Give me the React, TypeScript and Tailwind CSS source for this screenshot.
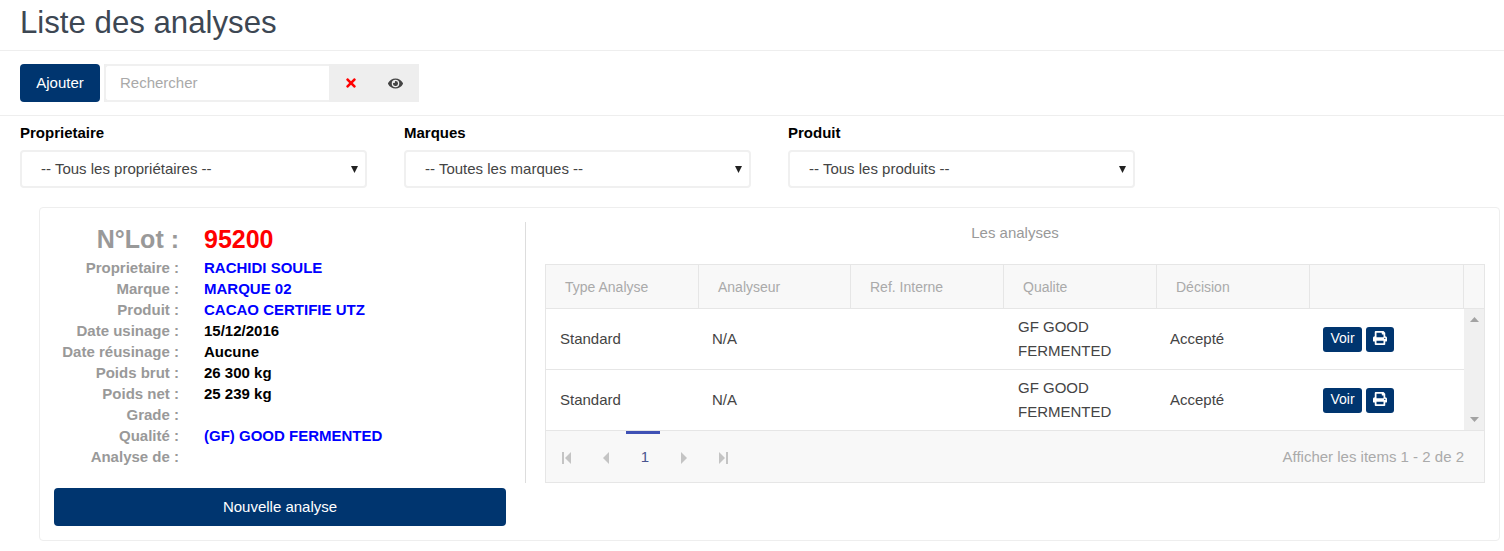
import { FaEye, FaPrint, FaTimes } from "react-icons/fa";

const filters = [
  { label: "Proprietaire", value: "-- Tous les propriétaires --" },
  { label: "Marques", value: "-- Toutes les marques --" },
  { label: "Produit", value: "-- Tous les produits --" },
];

const lotRows: { label: string; value?: string; color?: string }[] = [
  { label: "Proprietaire :", value: "RACHIDI SOULE", color: "text-[#0000ff]" },
  { label: "Marque :", value: "MARQUE 02", color: "text-[#0000ff]" },
  { label: "Produit :", value: "CACAO CERTIFIE UTZ", color: "text-[#0000ff]" },
  { label: "Date usinage :", value: "15/12/2016", color: "text-black" },
  { label: "Date réusinage :", value: "Aucune", color: "text-black" },
  { label: "Poids brut :", value: "26 300 kg", color: "text-black" },
  { label: "Poids net :", value: "25 239 kg", color: "text-black" },
  { label: "Grade :" },
  { label: "Qualité :", value: "(GF) GOOD FERMENTED", color: "text-[#0000ff]" },
  { label: "Analyse de :" },
];

const columns = "grid grid-cols-[153px_152px_153px_153px_153px_154px]";

function FilterSelect({ label, value }: { label: string; value: string }) {
  return (
    <div className="w-[347px]">
      <p className="h-[18px] text-[15px] leading-[18px] font-bold text-black">{label}</p>
      <div className="mt-[8px] flex h-[38px] items-center justify-between rounded border-2 border-[#f0f0f0] pr-[7px] pl-[19px] text-[15px] text-[#444444]">
        <span>{value}</span>
        <svg className="h-[7px] w-[7px] text-[#222222]" viewBox="0 0 8 8" aria-hidden>
          <path d="M0 0h8L4 8z" fill="currentColor" />
        </svg>
      </div>
    </div>
  );
}

function AnalysisRow() {
  return (
    <div className={`${columns} h-[61px] items-center border-b border-[#e6e6e6] text-[15px] leading-[24px] text-[#444444]`}>
      <span className="pl-[14px]">Standard</span>
      <span className="pl-[13px]">N/A</span>
      <span />
      <span className="pl-[14px]">
        GF GOOD
        <br />
        FERMENTED
      </span>
      <span className="pl-[13px]">Accepté</span>
      <div className="flex gap-1 pl-[13px]">
        <button type="button" className="h-[25px] w-[39px] rounded-[3px] bg-[#00356f] pb-[2px] text-[14px] leading-none text-white">
          Voir
        </button>
        <button type="button" className="flex h-[25px] w-[28px] items-center justify-center rounded-[3px] bg-[#00356f] pb-[2px] text-white">
          <FaPrint className="h-[14px] w-[14px]" />
        </button>
      </div>
    </div>
  );
}

function PagerIcon({ d, bar }: { d: string; bar?: number }) {
  return (
    <svg className="h-[14px] w-[11px] text-[#c4c4c4]" viewBox="0 0 11 14" aria-hidden>
      <path d={d} fill="currentColor" />
      {bar !== undefined && <rect x={bar} y="1" width="2" height="12" fill="currentColor" />}
    </svg>
  );
}

export default function App() {
  return (
    <div className="h-[551px] overflow-hidden bg-white font-['Liberation_Sans',Arial,sans-serif]">
      <header className="h-[51px] border-b border-[#eeeeee] pl-[20px]">
        <h1 className="pt-[4px] text-[31.2px] leading-[38px] text-[#3d4753]">Liste des analyses</h1>
      </header>

      <div className="flex h-[65px] items-start gap-[4px] border-b border-[#eeeeee] pt-[13px] pl-[20px]">
        <button type="button" className="h-[38px] w-[80px] rounded bg-[#00356f] text-[15px] text-white">
          Ajouter
        </button>
        <div className="flex h-[38px] bg-[#eeeeee]">
          <div className="flex w-[225px] items-center rounded-l border-2 border-r-0 border-[#f0f0f0] bg-white pl-[14px] text-[15px] text-[#a9a9a9]">
            Rechercher
          </div>
          <div className="flex w-[45px] items-center justify-center pr-[2px] text-[#ff0000]">
            <FaTimes className="h-[14px] w-[14px]" />
          </div>
          <div className="flex w-[45px] items-center justify-center pr-[3px] text-[#444444]">
            <FaEye className="h-[15px] w-[15px]" />
          </div>
        </div>
      </div>

      <div className="flex gap-[37px] pt-[8px] pl-[20px]">
        {filters.map((filter) => (
          <FilterSelect key={filter.label} label={filter.label} value={filter.value} />
        ))}
      </div>

      <section className="mt-[19px] ml-[39px] flex h-[334px] w-[1461px] rounded border border-[#eeeeee] pt-[14px] pl-[14px]">
        <div className="w-[452px]">
          <div className="flex h-[35px] items-center">
            <span className="w-[125px] text-right text-[25px] font-bold text-[#999999]">N°Lot :</span>
            <span className="ml-[25px] text-[25px] font-bold text-[#ff0000]">95200</span>
          </div>
          <dl className="mt-[1px]">
            {lotRows.map((row) => (
              <div key={row.label} className="flex h-[21px] items-center text-[15px] font-bold">
                <dt className="w-[125px] text-right whitespace-nowrap text-[#999999]">{row.label}</dt>
                <dd className={`ml-[25px] ${row.color ?? ""}`}>{row.value}</dd>
              </div>
            ))}
          </dl>
          <button type="button" className="mt-[20px] h-[38px] w-full rounded bg-[#00356f] pt-[1px] text-[15px] text-white">
            Nouvelle analyse
          </button>
        </div>

        <div className="ml-[19px] h-[261px] w-px bg-[#dddddd]" />

        <div className="ml-[19px] w-[940px]">
          <p className="h-[42px] text-center text-[15px] text-[#999999]">Les analyses</p>
          <div className="h-[219px] border border-[#e6e6e6]">
            <div className="flex h-[44px] border-b border-[#e6e6e6] bg-[#f8f8f8] text-[14px] text-[#aaaaaa]">
              {["Type Analyse", "Analyseur", "Ref. Interne", "Qualite", "Décision", ""].map((title, i) => (
                <div
                  key={i}
                  className={`flex items-center border-r border-[#e6e6e6] pt-[2px] pl-[19px] ${i === 1 ? "w-[152px]" : i === 5 ? "w-[154px]" : "w-[153px]"}`}
                >
                  {title}
                </div>
              ))}
            </div>
            <div className="flex h-[122px]">
              <div className="w-[918px]">
                <AnalysisRow />
                <AnalysisRow />
              </div>
              <div className="flex w-[20px] flex-col items-center justify-between border-b border-[#e6e6e6] bg-[#f0f0f0] py-[8px]">
                <svg className="h-[5px] w-[9px] text-[#a3a3a3]" viewBox="0 0 9 5" aria-hidden>
                  <path d="M4.5 0L9 5H0z" fill="currentColor" />
                </svg>
                <svg className="h-[5px] w-[9px] text-[#a3a3a3]" viewBox="0 0 9 5" aria-hidden>
                  <path d="M0 0h9L4.5 5z" fill="currentColor" />
                </svg>
              </div>
            </div>
            <div className="flex h-[51px] items-center justify-between bg-[#f8f8f8] pt-[2px] pr-[20px] pl-[15px] text-[15px] text-[#aaaaaa]">
              <div className="flex items-center">
                <PagerIcon d="M10 1v12L4 7z" bar={1} />
                <span className="ml-[29px]">
                  <PagerIcon d="M8 1v12L2 7z" />
                </span>
                <div className="relative ml-[14px] flex h-[51px] w-[34px] items-center justify-center pl-[4px] text-[#4a5590]">
                  <span className="absolute top-[-1px] left-0 h-[3px] w-[34px] bg-[#3f51b5]" />
                  1
                </div>
                <span className="ml-[18px]">
                  <PagerIcon d="M3 1v12l6-6z" />
                </span>
                <span className="ml-[29px]">
                  <PagerIcon d="M1 1v12l6-6z" bar={8} />
                </span>
              </div>
              <span>Afficher les items 1 - 2 de 2</span>
            </div>
          </div>
        </div>
      </section>
    </div>
  );
}
